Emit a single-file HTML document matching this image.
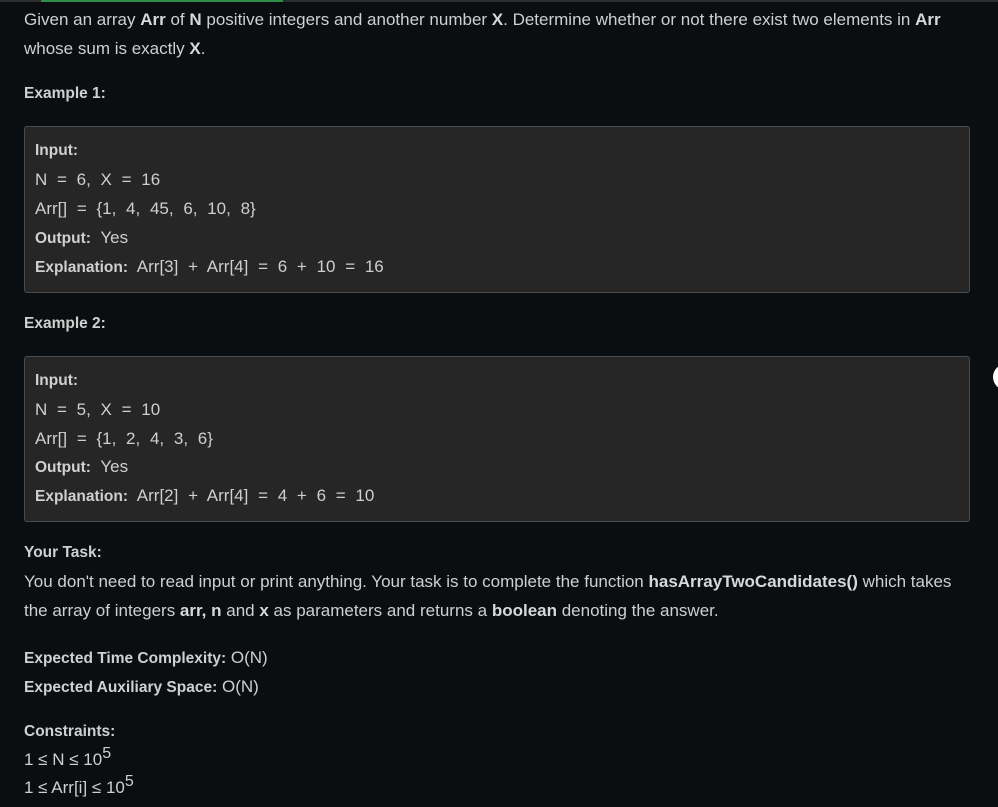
<!DOCTYPE html>
<html><head><meta charset="utf-8"><style>
html,body{margin:0;padding:0;background:#0b0e10;width:998px;height:807px;overflow:hidden;position:relative;font-family:"Liberation Sans",sans-serif;color:#cfcfcf;font-size:17px}
.l{position:absolute;left:24px;white-space:nowrap;line-height:20px}
.b{position:absolute;left:35px;white-space:nowrap;line-height:20px}
.c{word-spacing:5px}
b{color:#d8d8d8;font-weight:bold}
.h{font-weight:bold;font-size:15.5px;color:#d0d0d0;word-spacing:0}
.box{position:absolute;left:24px;width:944px;background:#262626;border:1px solid #4a4a4a;border-radius:3px}
sup{font-size:16px;line-height:0;vertical-align:7px}
</style></head><body>
<div style="position:absolute;left:0;top:0;width:998px;height:2px;background:#2a2d30"></div>
<div style="position:absolute;left:41px;top:0;width:242px;height:2px;background:#2f8d46"></div>
<div class="l" style="top:10px">Given an array <b>Arr</b> of <b>N</b> positive integers and another number <b>X</b>. Determine whether or not there exist two elements in <b>Arr</b></div>
<div class="l" style="top:39px">whose sum is exactly <b>X</b>.</div>
<div class="l h" style="top:84px">Example 1:</div>
<div class="box" style="top:126px;height:165px"></div>
<div class="b h" style="top:141px">Input:</div>
<div class="b c" style="top:170px">N = 6, X = 16</div>
<div class="b c" style="top:199px">Arr[] = {1, 4, 45, 6, 10, 8}</div>
<div class="b c" style="top:228px"><span class="h">Output:</span> Yes</div>
<div class="b c" style="top:257px"><span class="h">Explanation:</span> Arr[3] + Arr[4] = 6 + 10 = 16</div>
<div class="l h" style="top:314px">Example 2:</div>
<div class="box" style="top:356px;height:164px"></div>
<div class="b h" style="top:371px">Input:</div>
<div class="b c" style="top:400px">N = 5, X = 10</div>
<div class="b c" style="top:429px">Arr[] = {1, 2, 4, 3, 6}</div>
<div class="b c" style="top:457px"><span class="h">Output:</span> Yes</div>
<div class="b c" style="top:486px"><span class="h">Explanation:</span> Arr[2] + Arr[4] = 4 + 6 = 10</div>
<div style="position:absolute;left:993px;top:364px;width:26px;height:26px;border-radius:50%;background:#fff"></div>
<div class="l h" style="top:543px">Your Task:</div>
<div class="l" style="top:572px">You don't need to read input or print anything. Your task is to complete the function <b>hasArrayTwoCandidates()</b> which takes</div>
<div class="l" style="top:601px">the array of integers <b>arr, n</b> and <b>x</b> as parameters and returns a <b>boolean</b> denoting the answer.</div>
<div class="l" style="top:648px"><span class="h">Expected Time Complexity:</span> O(N)</div>
<div class="l" style="top:677px"><span class="h">Expected Auxiliary Space:</span> O(N)</div>
<div class="l h" style="top:722px">Constraints:</div>
<div class="l" style="top:750px">1 ≤ N ≤ 10<sup>5</sup></div>
<div class="l" style="top:778px">1 ≤ Arr[i] ≤ 10<sup>5</sup></div>
</body></html>
